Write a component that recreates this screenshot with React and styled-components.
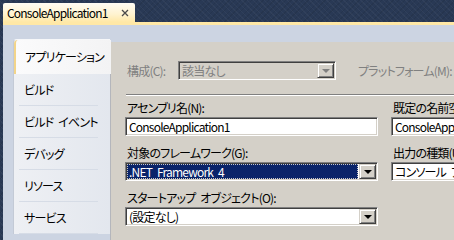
import styled, { createGlobalStyle } from 'styled-components';

const GlobalStyle = createGlobalStyle`
  html, body {
    margin: 0;
    padding: 0;
    width: 454px;
    height: 240px;
    overflow: hidden;
    background: #293955;
  }
  * {
    box-sizing: border-box;
  }
`;

const font = `"Noto Sans CJK JP", "Noto Sans", sans-serif`;

const Frame = styled.div`
  width: 454px;
  height: 240px;
  display: flex;
  flex-direction: column;
  font-family: ${font};
  font-size: 12px;
  font-feature-settings: "palt" 1;
  letter-spacing: -0.8px;
  word-spacing: 3px;
  line-height: 14px;
  color: #000;
  background-color: #293955;
  background-image:
    repeating-linear-gradient(45deg, rgba(255,255,255,0.035) 0 1px, transparent 1px 4px),
    repeating-linear-gradient(-45deg, rgba(0,0,0,0.08) 0 1px, transparent 1px 4px);
`;

const TabStrip = styled.div`
  height: 22px;
  flex: none;
  display: flex;
  align-items: flex-end;
  padding-left: 3px;
`;

const DocTab = styled.div`
  height: 19px;
  width: 132px;
  display: flex;
  align-items: center;
  justify-content: space-between;
  padding: 1px 6px 0 4px;
  border-radius: 2px 2px 0 0;
  background: linear-gradient(#fffcf4, #fff3cf 60%, #ffe8a6);
  color: #000;
  white-space: nowrap;
`;

const CloseIcon = () => (
  <svg width="8" height="8" viewBox="0 0 8 8">
    <path d="M1 1 L7 7 M7 1 L1 7" stroke="#4a4a4a" strokeWidth="1.3" />
  </svg>
);

const DocWell = styled.div`
  flex: 1;
  margin-left: 3px;
  display: flex;
  align-items: flex-start;
  border-top: 3px solid #ffe8a6;
  padding: 14px 0 0 10px;
  background: #ccd4e2;
  min-height: 0;
`;

const SideNav = styled.div`
  width: 97px;
  flex: none;
  display: flex;
  flex-direction: column;
  border-radius: 4px 0 0 0;
  background: linear-gradient(90deg, #eef0f4, #e3e7ee);
  border-top: 1px solid #f6f7f9;
  border-left: 1px solid #c3cad6;
`;

const NavItem = styled.div`
  height: ${(p) => (p.$active ? '34px' : '32px')};
  display: flex;
  align-items: center;
  padding-left: ${(p) => (p.$active ? '9px' : '10px')};
  white-space: nowrap;
  position: relative;
  background: ${(p) => (p.$active ? 'linear-gradient(90deg, #fbfbfc, #f3f3f4)' : 'transparent')};
  border-left: ${(p) => (p.$active ? '2px solid #f2d48a' : 'none')};
  border-radius: ${(p) => (p.$active ? '4px 0 0 0' : '0')};
  margin-right: ${(p) => (p.$active ? '-1px' : '0')};
  &::after {
    content: '';
    display: ${(p) => (p.$active ? 'none' : 'block')};
    position: absolute;
    left: 5px;
    right: 12px;
    bottom: 0;
    border-bottom: 1px solid #d6dce6;
  }
`;

const ContentPane = styled.div`
  flex: 1;
  align-self: stretch;
  margin-top: 3px;
  background: #d4d0c8;
  border-left: 1px solid #b4b6bc;
  padding: 19px 0 0 14px;
  overflow: hidden;
`;

const TopRow = styled.div`
  display: flex;
  align-items: center;
  white-space: nowrap;
`;

const Label = styled.div`
  padding-left: 2px;
  white-space: nowrap;
  color: ${(p) => (p.$disabled ? '#808080' : '#000')};
  width: ${(p) => p.$width || 'auto'};
  margin-left: ${(p) => p.$gap || '0'};
  flex: none;
`;

const Separator = styled.div`
  margin: 14px 0 0 1px;
  border-top: 1px solid #808080;
  border-bottom: 1px solid #fff;
`;

const FieldGrid = styled.div`
  display: grid;
  grid-template-columns: 253px 253px;
  column-gap: 13px;
  row-gap: 10px;
  margin-top: 5px;
`;

const Field = styled.div`
  display: flex;
  flex-direction: column;
  gap: 2px;
`;

const Sunken = styled.div`
  height: 19px;
  width: ${(p) => p.$width || '100%'};
  flex: none;
  display: flex;
  align-items: stretch;
  border: 1px solid;
  border-color: #808080 #fff #fff #808080;
  box-shadow: inset 1px 1px #404040, inset -1px -1px #d4d0c8;
  padding: 1px;
  background: ${(p) => (p.$disabled ? '#d4d0c8' : '#fff')};
  color: ${(p) => (p.$disabled ? '#808080' : '#000')};
`;

const BoxText = styled.div`
  flex: 1;
  display: flex;
  align-items: center;
  padding-left: 2px;
  white-space: nowrap;
  overflow: hidden;
  margin-right: ${(p) => (p.$selected ? '1px' : '0')};
  background: ${(p) => (p.$selected ? '#0a246a' : 'transparent')};
  color: ${(p) => (p.$selected ? '#fff' : 'inherit')};
  outline: ${(p) => (p.$selected ? '1px dotted #c8c8c8' : 'none')};
  outline-offset: -1px;
`;

const DropButton = styled.div`
  width: 17px;
  flex: none;
  display: flex;
  align-items: center;
  justify-content: center;
  background: #d4d0c8;
  border: 1px solid;
  border-color: #d4d0c8 #404040 #404040 #d4d0c8;
  box-shadow: inset 1px 1px #fff, inset -1px -1px #808080;
  &::before {
    content: '';
    border-left: 4px solid transparent;
    border-right: 4px solid transparent;
    border-top: 4px solid ${(p) => (p.$disabled ? '#808080' : '#000')};
    margin-top: 1px;
  }
`;

const Combo = ({ children, disabled, selected, width }) => (
  <Sunken $disabled={disabled} $width={width}>
    <BoxText $selected={selected}>{children}</BoxText>
    <DropButton $disabled={disabled} />
  </Sunken>
);

const TextBox = ({ children, width }) => (
  <Sunken $width={width}>
    <BoxText>{children}</BoxText>
  </Sunken>
);

const navItems = ['アプリケーション', 'ビルド', 'ビルド イベント', 'デバッグ', 'リソース', 'サービス'];

const App = () => {
  return (
    <>
      <GlobalStyle />
      <Frame>
        <TabStrip>
          <DocTab>
            <span>ConsoleApplication1</span>
            <CloseIcon />
          </DocTab>
        </TabStrip>
        <DocWell>
          <SideNav>
            {navItems.map((item, i) => (
              <NavItem key={item} $active={i === 0}>{item}</NavItem>
            ))}
          </SideNav>
          <ContentPane>
            <TopRow>
              <Label $disabled $width="53px">構成(C):</Label>
              <Combo disabled width="158px">該当なし</Combo>
              <Label $disabled $gap="20px">プラットフォーム(M):</Label>
            </TopRow>
            <Separator />
            <FieldGrid>
              <Field>
                <Label>アセンブリ名(N):</Label>
                <TextBox>ConsoleApplication1</TextBox>
              </Field>
              <Field>
                <Label>既定の名前空間(M):</Label>
                <TextBox>ConsoleApplication1</TextBox>
              </Field>
              <Field>
                <Label>対象のフレームワーク(G):</Label>
                <Combo selected>.NET Framework 4</Combo>
              </Field>
              <Field>
                <Label>出力の種類(U):</Label>
                <Combo>コンソール アプリケーション</Combo>
              </Field>
              <Field>
                <Label>スタートアップ オブジェクト(O):</Label>
                <Combo>(設定なし)</Combo>
              </Field>
            </FieldGrid>
          </ContentPane>
        </DocWell>
      </Frame>
    </>
  );
};

export default App;
